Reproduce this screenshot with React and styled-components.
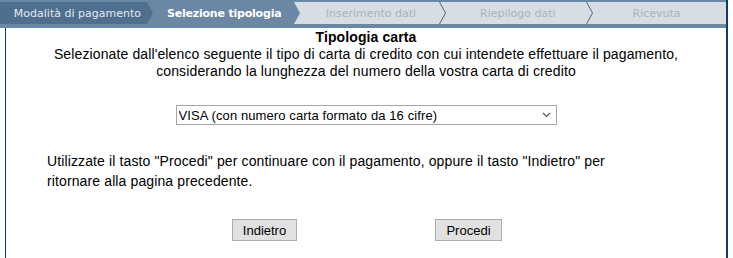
import React from "react";
import styled, { createGlobalStyle } from "styled-components";

const Global = createGlobalStyle`
  html, body { margin: 0; padding: 0; background: #fff; }
  body { font-family: "Liberation Sans", Arial, sans-serif; font-size: 14px; color: #000; }
`;

const Page = styled.div`
  width: 726px;
  border-right: 2px solid #0e3a6c;
  min-height: 258px;
  display: flex;
  flex-direction: column;
`;

const Steps = styled.div`
  display: flex;
  background: #6a87a3;
  padding: 2px 0 4px 0;
`;

const Step = styled.div`
  position: relative;
  flex: 1;
  height: 22px;
  display: flex;
  align-items: center;
  justify-content: center;
  font-family: "DejaVu Sans", Verdana, sans-serif;
  font-size: 11px;
  white-space: nowrap;
  padding-left: ${(p) => p.$shift || 0}px;
  background: ${(p) =>
    p.$state === "done" ? "#4e6f8e" : p.$state === "current" ? "#6a87a3" : "#d6dde3"};
  color: ${(p) =>
    p.$state === "done" ? "#e4eaef" : p.$state === "current" ? "#ffffff" : "#a9b3bd"};
  font-weight: ${(p) => (p.$state === "current" ? "bold" : "normal")};
  letter-spacing: ${(p) => (p.$state === "current" ? "-0.2px" : "0")};
`;

const Arrow = styled.svg`
  position: absolute;
  top: 0;
  right: -7px;
  width: 8px;
  height: 22px;
  z-index: 2;
`;

const Content = styled.div`
  flex: 1;
  margin-left: 5px;
  border-left: 1px solid #0e3a6c;
  display: flex;
  flex-direction: column;
  align-items: center;
  letter-spacing: 0.12px;
`;

const Title = styled.div`
  font-weight: bold;
  font-size: 14px;
  line-height: 16px;
  margin-top: 1px;
  letter-spacing: 0.1px;
`;

const Intro = styled.div`
  text-align: center;
  line-height: 17px;
  margin-top: 1px;
`;

const SelectWrap = styled.div`
  position: relative;
  width: 381px;
  margin-top: 25px;
  letter-spacing: 0;
`;

const Select = styled.select`
  appearance: none;
  -webkit-appearance: none;
  width: 381px;
  height: 20px;
  margin: 0;
  padding: 0 0 0 2px;
  border: 1px solid #a6a6a6;
  border-radius: 0;
  background: #fff;
  font-family: "Liberation Sans", Arial, sans-serif;
  font-size: 13px;
  letter-spacing: 0.1px;
  color: #000;
  outline: none;
`;

const Chevron = styled.svg`
  position: absolute;
  right: 6px;
  top: 7px;
  width: 9px;
  height: 6px;
  pointer-events: none;
`;

const Note = styled.p`
  align-self: flex-start;
  margin: 26px 0 0 41px;
  width: 575px;
  line-height: 20px;
`;

const Buttons = styled.div`
  display: flex;
  justify-content: center;
  gap: 138px;
  margin-top: 28px;
  margin-left: 2px;
  letter-spacing: 0;
`;

const Button = styled.button`
  height: 22px;
  width: ${(p) => p.$w}px;
  padding: 0;
  border: 1px solid #adadad;
  border-radius: 0;
  background: #e1e1e1;
  font-family: "Liberation Sans", Arial, sans-serif;
  font-size: 13px;
  color: #000;
`;

const steps = [
  { label: "Modalità di pagamento", state: "done", shift: 8 },
  { label: "Selezione tipologia", state: "current", shift: 8 },
  { label: "Inserimento dati", state: "todo", shift: 8 },
  { label: "Riepilogo dati", state: "todo", shift: 8 },
  { label: "Ricevuta", state: "todo", shift: 0 },
];

function StepArrow({ state, next }) {
  if (state === "done" || state === "current") {
    const fill = state === "done" ? "#4e6f8e" : "#6a87a3";
    return (
      <Arrow viewBox="0 0 8 22">
        <polygon points="0,0 1,0 7,11 1,22 0,22" fill={fill} />
      </Arrow>
    );
  }
  if (next) {
    return (
      <Arrow viewBox="0 0 8 22">
        <polyline points="0.5,0 6.5,11 0.5,22" fill="none" stroke="#4d6a88" strokeWidth="1" />
      </Arrow>
    );
  }
  return null;
}

export default function App() {
  return (
    <>
      <Global />
      <Page>
        <Steps>
          {steps.map((s, i) => (
            <Step key={s.label} $state={s.state} $shift={s.shift}>
              {s.label}
              <StepArrow state={s.state} next={i < steps.length - 1} />
            </Step>
          ))}
        </Steps>
        <Content>
          <Title>Tipologia carta</Title>
          <Intro>
            Selezionate dall'elenco seguente il tipo di carta di credito con cui intendete effettuare il pagamento,
            <br />
            considerando la lunghezza del numero della vostra carta di credito
          </Intro>
          <SelectWrap>
            <Select defaultValue="visa16">
              <option value="visa16">VISA (con numero carta formato da 16 cifre)</option>
            </Select>
            <Chevron viewBox="0 0 9 6">
              <polyline points="1,1 4.5,4.5 8,1" fill="none" stroke="#555" strokeWidth="1.2" />
            </Chevron>
          </SelectWrap>
          <Note>
            Utilizzate il tasto "Procedi" per continuare con il pagamento, oppure il tasto "Indietro" per ritornare alla pagina precedente.
          </Note>
          <Buttons>
            <Button $w={65}>Indietro</Button>
            <Button $w={67}>Procedi</Button>
          </Buttons>
        </Content>
      </Page>
    </>
  );
}
